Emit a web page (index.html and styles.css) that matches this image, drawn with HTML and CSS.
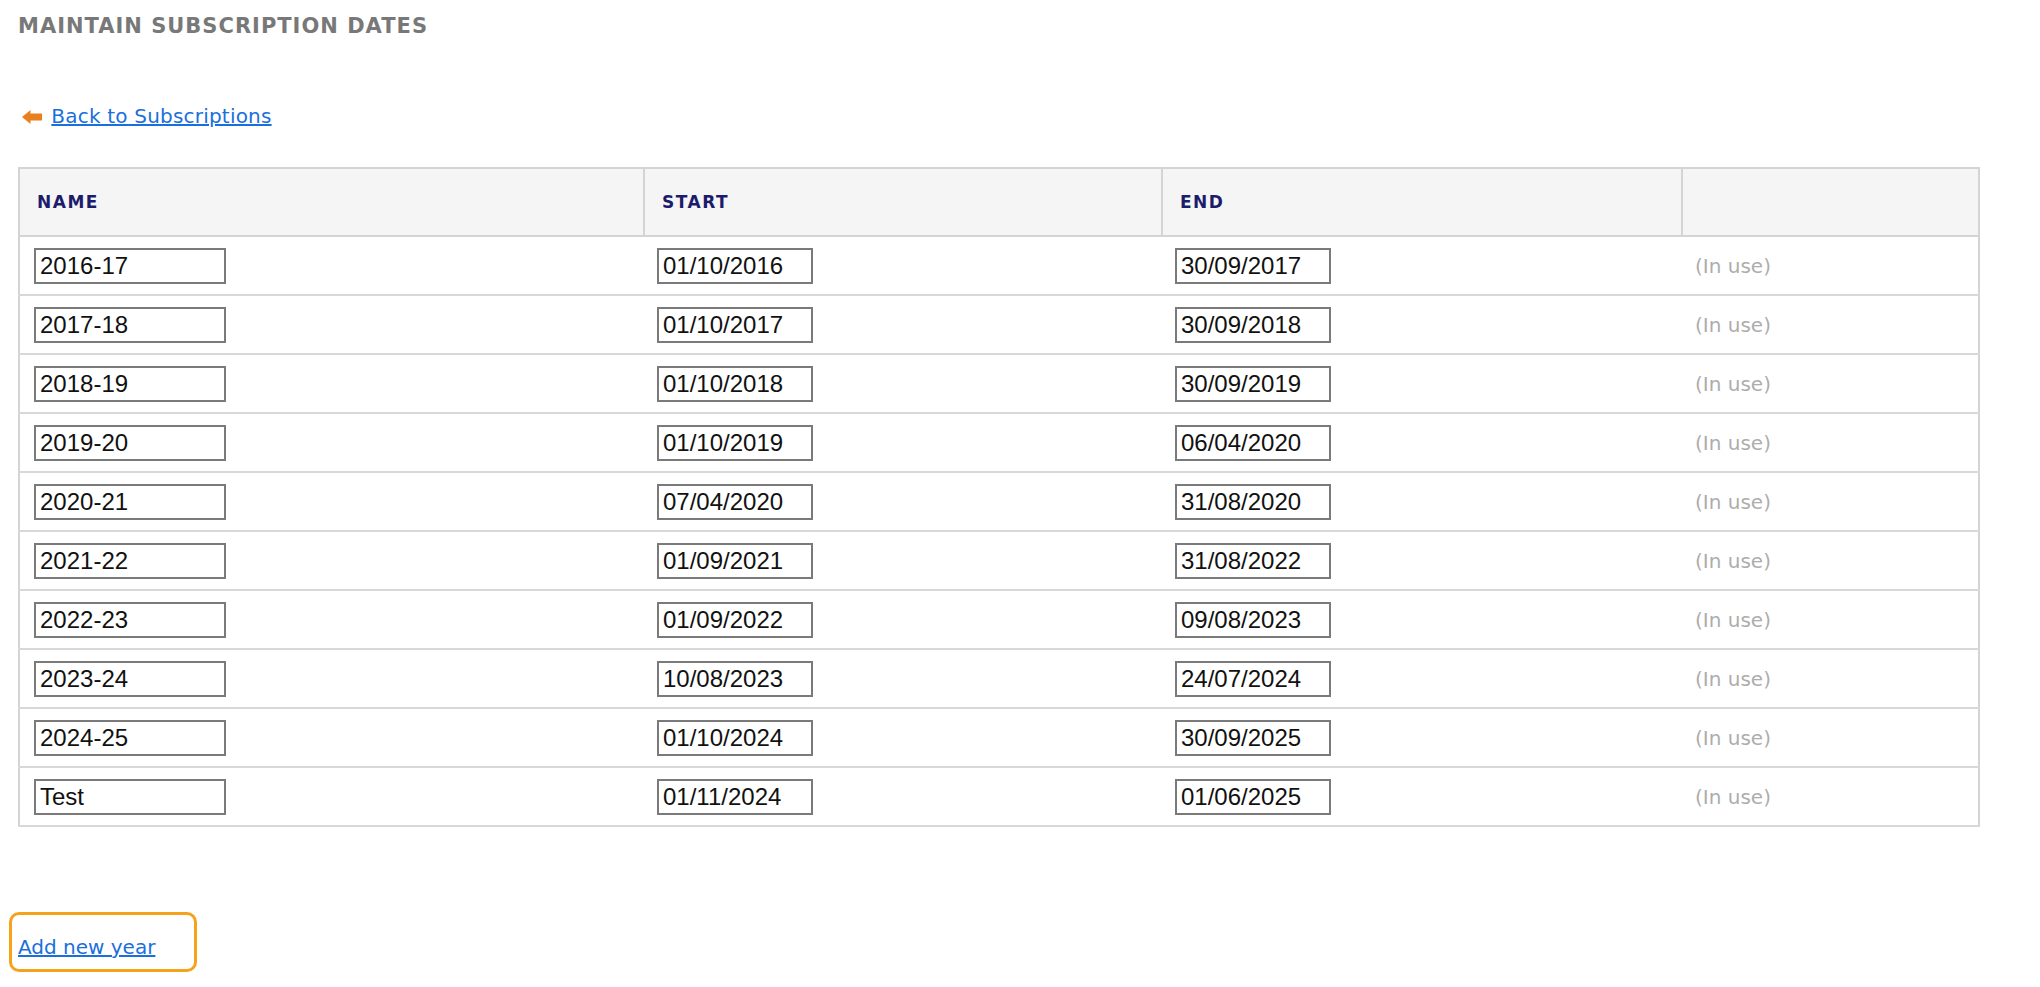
FILE: index.html
```html
<!DOCTYPE html>
<html>
<head>
  <title>Maintain Subscription Dates</title>
  <link rel="stylesheet" href="styles.css">
</head>
<body>
  <div class="page">
    <h1 class="page-title">MAINTAIN SUBSCRIPTION DATES</h1>

    <p class="back-link">
      <svg class="back-arrow" width="20" height="14" viewBox="0 0 20 14">
        <path d="M0 7 L8.5 0 V3.5 H20 V10.5 H8.5 V14 Z" fill="#e8801f"/>
      </svg>
      <a href="#">Back to Subscriptions</a>
    </p>

    <table class="years-table">
      <colgroup>
        <col class="col-name">
        <col class="col-start">
        <col class="col-end">
        <col>
      </colgroup>
      <thead>
        <tr>
          <th>NAME</th>
          <th>START</th>
          <th>END</th>
          <th></th>
        </tr>
      </thead>
      <tbody id="year-rows"></tbody>
    </table>

    <div class="add-year">
      <a href="#">Add new year</a>
    </div>
  </div>

  <script>
    // subscription years
    var years = [
      ["2016-17", "01/10/2016", "30/09/2017"],
      ["2017-18", "01/10/2017", "30/09/2018"],
      ["2018-19", "01/10/2018", "30/09/2019"],
      ["2019-20", "01/10/2019", "06/04/2020"],
      ["2020-21", "07/04/2020", "31/08/2020"],
      ["2021-22", "01/09/2021", "31/08/2022"],
      ["2022-23", "01/09/2022", "09/08/2023"],
      ["2023-24", "10/08/2023", "24/07/2024"],
      ["2024-25", "01/10/2024", "30/09/2025"],
      ["Test", "01/11/2024", "01/06/2025"]
    ];

    var tbody = document.getElementById("year-rows");

    for (var i = 0; i < years.length; i++) {
      var row = tbody.insertRow(i);
      row.insertCell(0).innerHTML = '<input type="text" class="name-input" value="' + years[i][0] + '">';
      row.insertCell(1).innerHTML = '<input type="text" class="date-input" value="' + years[i][1] + '">';
      row.insertCell(2).innerHTML = '<input type="text" class="date-input" value="' + years[i][2] + '">';
      var useCell = row.insertCell(3);
      useCell.className = "in-use";
      useCell.textContent = "(In use)";
    }
  </script>
</body>
</html>
```

FILE: styles.css
```css
body {
  margin: 0;
  font-family: "DejaVu Sans", Verdana, sans-serif;
  background-color: #fff;
}
.page {
  padding: 14px 60px 20px 18px;
}
.page-title {
  margin: 0;
  font-size: 21px;
  line-height: 24px;
  font-weight: bold;
  letter-spacing: 1px;
  color: #787878;
}
.back-link {
  margin: 66px 0 0 0;
  font-size: 20px;
  line-height: 24px;
  padding-left: 4px;
}
.back-link a {
  letter-spacing: 0.2px;
}
.back-arrow {
  vertical-align: -1px;
  margin-right: 3px;
}
a {
  color: #1a6fdc;
}
.years-table {
  margin-top: 39px;
  width: 100%;
  table-layout: fixed;
  border-collapse: collapse;
  border: 2px solid #d4d4d4;
}
.col-name {
  width: 625px;
}
.col-start {
  width: 518px;
}
.col-end {
  width: 520px;
}
.years-table th {
  height: 66px;
  padding: 0 17px;
  background-color: #f5f5f5;
  border-right: 2px solid #d4d4d4;
  border-bottom: 2px solid #d4d4d4;
  text-align: left;
  font-size: 17px;
  font-weight: bold;
  letter-spacing: 1.5px;
  color: #1c1c6c;
}
.years-table td {
  height: 57px;
  padding: 0 13px;
  border-bottom: 2px solid #d8d8d8;
}
.years-table td:first-child {
  padding-left: 14px;
}
.name-input,
.date-input {
  box-sizing: border-box;
  height: 36px;
  padding: 0 4px;
  border: 2px solid #7a7a7a;
  font-family: "Liberation Sans", Arial, sans-serif;
  font-size: 24px;
  color: #111;
  background: #fff;
}
.name-input {
  width: 192px;
}
.date-input {
  width: 156px;
}
.in-use {
  font-size: 20px;
  color: #adadad;
}
.add-year {
  box-sizing: border-box;
  width: 188px;
  margin: 85px 0 0 -9px;
  padding: 20px 6px 10px 6px;
  border: 3px solid #f7a21b;
  border-radius: 10px;
  font-size: 20px;
  line-height: 24px;
}
```
